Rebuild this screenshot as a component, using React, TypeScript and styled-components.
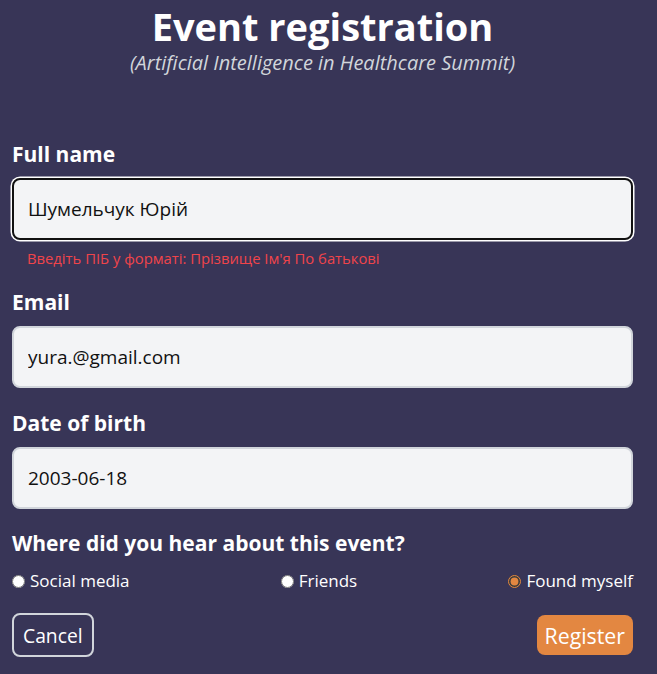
import React, { useEffect, useRef } from "react";
import styled, { createGlobalStyle } from "styled-components";

const Global = createGlobalStyle`
  html, body { margin: 0; padding: 0; background: #383557; }
  body { font-family: "Open Sans", "Noto Sans", sans-serif; color: #fff; }
  * { box-sizing: border-box; }
`;

const Page = styled.div`
  min-height: 674px;
  padding: 0 24px 0 12px;
  display: flex;
  flex-direction: column;
`;

const Header = styled.header`
  display: flex;
  flex-direction: column;
  align-items: center;
  padding-top: 2px;
`;

const Title = styled.h1`
  margin: 0;
  font-size: 38px;
  font-weight: 700;
  line-height: 48px;
  color: #fff;
`;

const Subtitle = styled.p`
  margin: 0;
  font-size: 20px;
  font-style: italic;
  line-height: 26px;
  color: #d1d5db;
`;

const Form = styled.form`
  display: flex;
  flex-direction: column;
  margin-top: 66px;
`;

const Field = styled.div<{ $gap?: number }>`
  display: flex;
  flex-direction: column;
  margin-bottom: ${(p) => p.$gap ?? 22}px;
`;

const Label = styled.label`
  font-size: 21px;
  font-weight: 700;
  line-height: 24px;
  margin-bottom: 12px;
  color: #fff;
`;

const Input = styled.input<{ $focused?: boolean }>`
  height: 62px;
  width: 100%;
  padding: 0 14px;
  font-family: "Open Sans", "Noto Sans", sans-serif;
  font-size: 19px;
  color: #111;
  background: #f3f4f6;
  border: 2px solid ${(p) => (p.$focused ? "#111" : "#d1d5db")};
  border-radius: 8px;
  outline: none;
  box-shadow: ${(p) => (p.$focused ? "0 0 0 1.5px #fff" : "none")};
  caret-color: #111;
`;

const ErrorText = styled.div`
  margin: 8px 0 0 15px;
  font-size: 14.8px;
  line-height: 20px;
  color: #f0444a;
`;

const Question = styled.div`
  font-size: 21px;
  font-weight: 700;
  line-height: 26px;
  color: #fff;
  margin-bottom: 13px;
`;

const RadioRow = styled.div`
  display: flex;
  justify-content: space-between;
  align-items: center;
`;

const RadioLabel = styled.label`
  display: flex;
  align-items: center;
  gap: 5px;
  font-size: 17px;
  line-height: 24px;
  color: #fff;
`;

const Radio = styled.input`
  margin: 0;
  width: 13px;
  height: 13px;
  accent-color: #e38741;
`;

const Actions = styled.div`
  display: flex;
  justify-content: space-between;
  align-items: center;
  margin-top: 20px;
`;

const CancelButton = styled.button`
  height: 44px;
  padding: 0 9px;
  font-family: "Open Sans", "Noto Sans", sans-serif;
  font-size: 19.3px;
  color: #fff;
  background: transparent;
  border: 2px solid #d1d5db;
  border-radius: 8px;
`;

const RegisterButton = styled.button`
  height: 40px;
  padding: 0 8px;
  font-family: "Open Sans", "Noto Sans", sans-serif;
  font-size: 21.3px;
  color: #fff;
  background: #e38741;
  border: none;
  border-radius: 8px;
`;

export default function App() {
  const ref = useRef<HTMLInputElement>(null);
  useEffect(() => {
    const el = ref.current;
    if (el) {
      el.focus();
      const n = el.value.length;
      el.setSelectionRange(n, n);
    }
  }, []);
  return (
    <>
      <Global />
      <Page>
        <Header>
          <Title>Event registration</Title>
          <Subtitle>(Artificial Intelligence in Healthcare Summit)</Subtitle>
        </Header>
        <Form onSubmit={(e) => e.preventDefault()}>
          <Field>
            <Label htmlFor="name">Full name</Label>
            <Input id="name" ref={ref} $focused defaultValue="Шумельчук Юрій" />
            <ErrorText>Введіть ПІБ у форматі: Прізвище Ім'я По батькові</ErrorText>
          </Field>
          <Field $gap={23}>
            <Label htmlFor="email">Email</Label>
            <Input id="email" defaultValue="yura.@gmail.com" />
          </Field>
          <Field $gap={21}>
            <Label htmlFor="dob">Date of birth</Label>
            <Input id="dob" defaultValue="2003-06-18" />
          </Field>
          <Question>Where did you hear about this event?</Question>
          <RadioRow>
            <RadioLabel>
              <Radio type="radio" name="src" />
              Social media
            </RadioLabel>
            <RadioLabel>
              <Radio type="radio" name="src" />
              Friends
            </RadioLabel>
            <RadioLabel>
              <Radio type="radio" name="src" defaultChecked />
              Found myself
            </RadioLabel>
          </RadioRow>
          <Actions>
            <CancelButton type="button">Cancel</CancelButton>
            <RegisterButton type="submit">Register</RegisterButton>
          </Actions>
        </Form>
      </Page>
    </>
  );
}
